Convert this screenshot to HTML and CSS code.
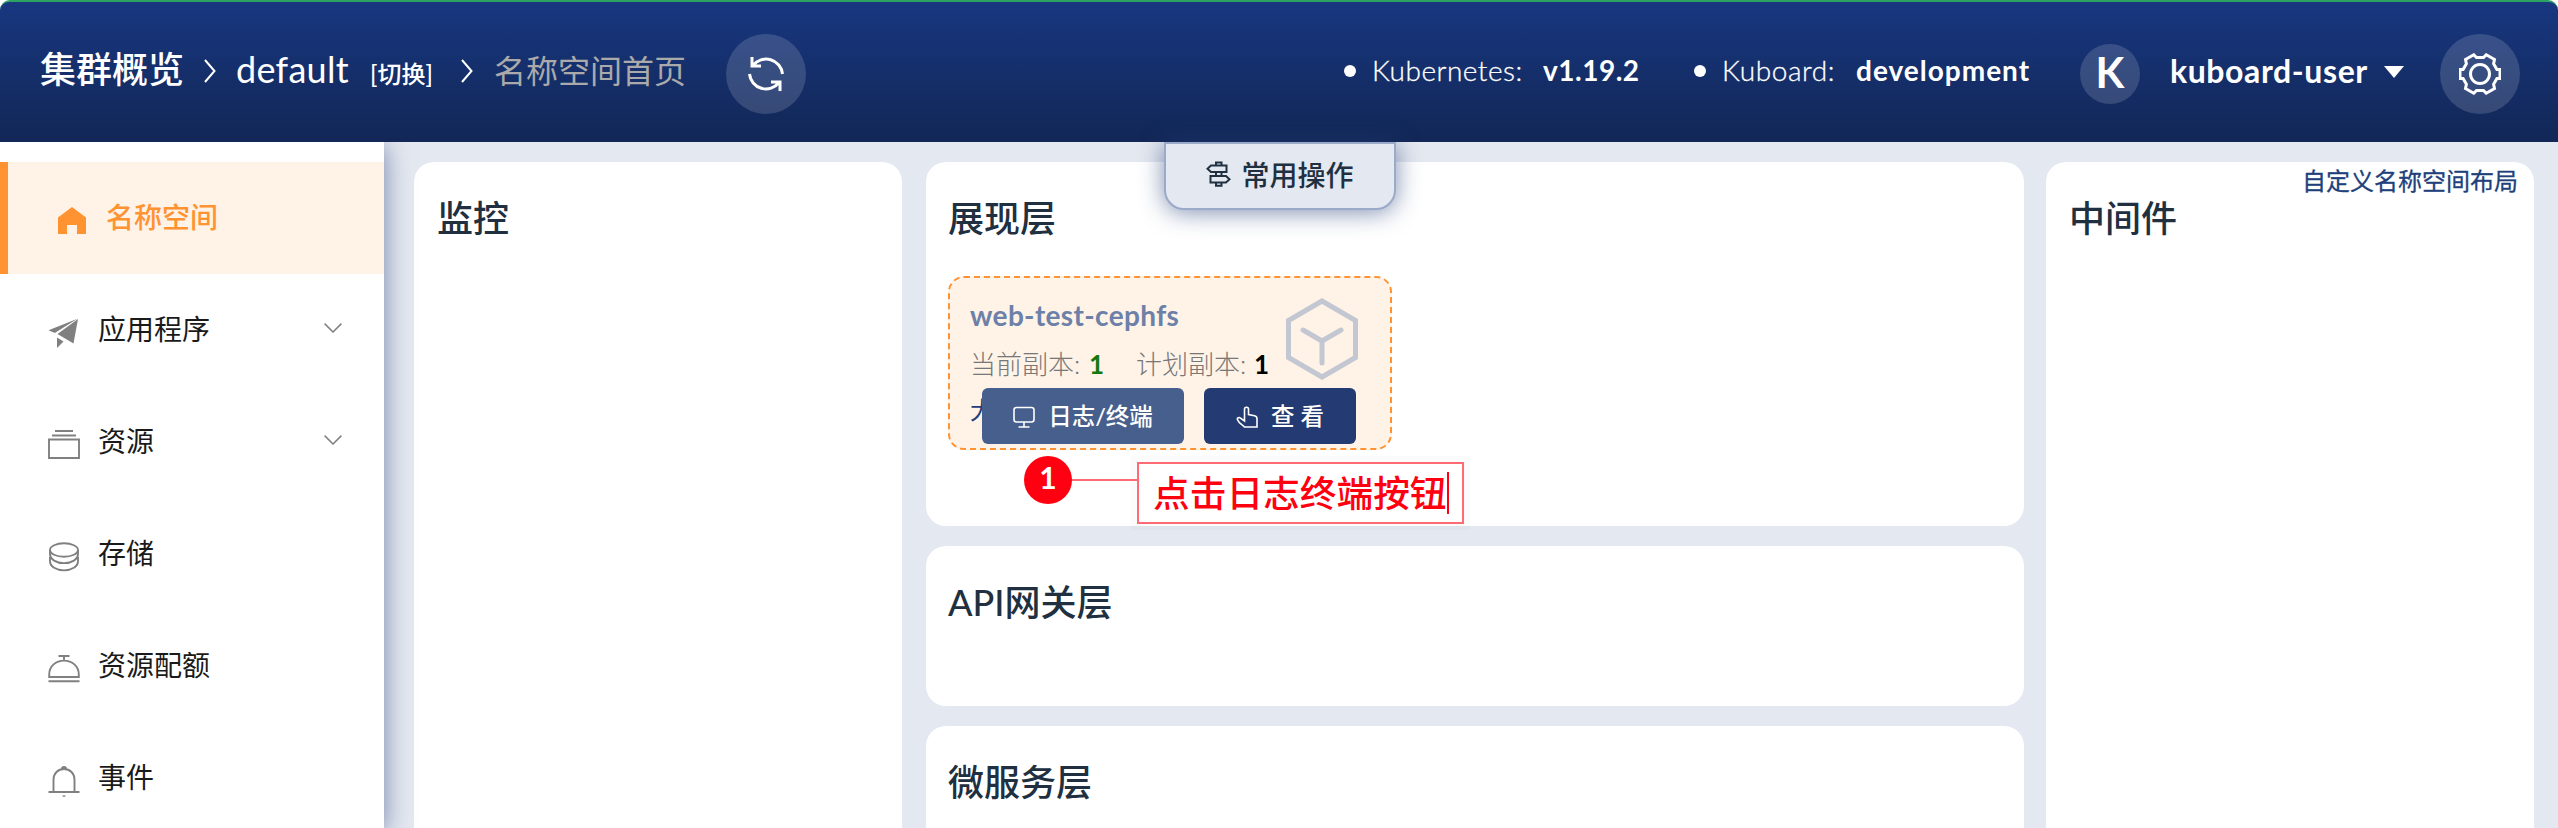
FILE: index.html
```html
<!DOCTYPE html>
<html lang="zh-CN">
<head>
<meta charset="utf-8">
<title>Kuboard</title>
<link rel="stylesheet" href="styles.css">
</head>
<body>
<header class="topbar">
  <nav class="crumbs">
    <span class="crumb crumb-root">集群概览</span>
    <svg class="sep" viewBox="0 0 12 24"><path d="M1 1l9.500 11L1 23"/></svg>
    <span class="crumb crumb-ns">default</span>
    <span class="crumb-switch">[切换]</span>
    <svg class="sep sep-last" viewBox="0 0 12 24"><path d="M1 1l9.500 11L1 23"/></svg>
    <span class="crumb-current">名称空间首页</span>
    <button class="round refresh"><svg viewBox="0 0 40 40"><path d="M6 3v9h9M7 11.500A16.500 16.500 0 0 1 36.500 20M34 37v-9h-9M33 28.500A16.500 16.500 0 0 1 3.500 20"/></svg></button>
  </nav>
  <div class="status">
    <i class="dot"></i><span class="label label-k8s">Kubernetes:</span><b class="ver ver-k8s">v1.19.2</b>
    <i class="dot"></i><span class="label label-kb">Kuboard:</span><b class="ver ver-kb">development</b>
    <span class="avatar">K</span>
    <span class="user">kuboard-user</span>
    <svg class="caret" viewBox="0 0 20 12"><path d="M0 0h20L10 12z"/></svg>
    <button class="round"><svg class="gear" viewBox="0 0 42 42"><circle cx="21" cy="21" r="9.500"/><path d="M14.800 1.800l2.700 2.700h7l2.700-2.700 8.300 4.700-.9 4.200 3.300 5.800h3.100v9h-3.100l-3.300 5.800.9 4.200-8.300 4.700-2.700-2.700h-7l-2.700 2.700-8.300-4.700.9-4.200-3.300-5.800H1v-9h3.100l3.300-5.800-.9-4.200z"/></svg></button>
  </div>
</header>
<div class="body">
  <aside class="sidebar">
    <a class="item active"><svg viewBox="0 0 32 32"><path class="solid" d="M16 2l14 10.500V29H21V20h-10v9H2V12.500z"/></svg><span>名称空间</span></a>
    <a class="item"><svg viewBox="0 0 32 32"><path class="solid" d="M.5 13.200L29.500 1.800 6.800 16zM30 2l-4.500 24.500L9.500 17zM9 20.500l6.500 4L9 31z"/></svg><span>应用程序</span><svg class="chev" viewBox="0 0 18 10"><path d="M.6.600L9 9 17.400.6"/></svg></a>
    <a class="item"><svg viewBox="0 0 32 32"><path d="M7 2h18M4 6.500h24M1 10.500h30v18.500H1z"/></svg><span>资源</span><svg class="chev" viewBox="0 0 18 10"><path d="M.6.600L9 9 17.400.6"/></svg></a>
    <a class="item"><svg viewBox="0 0 32 32"><ellipse cx="16" cy="9" rx="14" ry="6.700"/><path d="M2 9v3c-1 13.500 29 13.500 28 0V9M2 16v3.200c-1 13.500 29 13.500 28 0V16"/></svg><span>存储</span></a>
    <a class="item"><svg viewBox="0 0 32 32"><path d="M10.500 3h11M16 3v4.500M1.200 24v-2.500C1.200 13 8 7.600 16 7.600S30.800 13 30.800 21.500V24zM.5 28.300h31"/></svg><span>资源配额</span></a>
    <a class="item"><svg viewBox="0 0 32 32"><path d="M.5 27h31M5.500 27V14.500C5.500 8.500 10 4 16 4s10.500 4.500 10.500 10.500V27"/><path class="solid" d="M13 4a3 3 0 0 1 6 0zM14 30.500h4l-2 2z"/></svg><span>事件</span></a>
  </aside>
  <main class="board">
    <section class="card"><h2>监控</h2></section>
    <div class="stack">
      <section class="card layer-web">
        <h2>展现层</h2>
        <article class="workload">
          <div class="wl-name">web-test-cephfs</div>
          <div class="wl-row"><span class="rep">当前副本:</span><b class="now">1</b><span class="rep rep-plan">计划副本:</span><b class="plan">1</b></div>
          <div class="wl-size">大</div>
          <svg class="cube" viewBox="0 0 72 82"><path d="M36 3l33.500 19.500v37L36 79 2.500 59.500v-37z"/><path class="arms" d="M17 32l19 11 19-11M36 43v22"/></svg>
          <div class="actions">
            <button class="btn btn-log"><svg viewBox="0 0 22 22"><rect x="1" y="1.500" width="20" height="14.500" rx="2.500"/><path d="M11 16v4.500M5.500 21h11"/></svg>日志/终端</button>
            <button class="btn btn-view"><svg viewBox="0 0 22 22"><path d="M8.500 13V3.200a2 2 0 0 1 4 0v5.300l6 1.300c1.800.4 2.500 1.400 2.500 3V21H8.500c-2-2.500-5.500-3.500-7-7.300C.8 12 3.200 10.800 4.500 12.200L8.500 15z"/></svg>查 看</button>
          </div>
        </article>
        <div class="note"><span class="num">1</span><i class="wire"></i><span class="note-text">点击日志终端按钮</span></div>
      </section>
      <section class="card layer-api"><h2>API网关层</h2></section>
      <section class="card layer-micro"><h2>微服务层</h2></section>
    </div>
    <section class="card"><h2>中间件</h2><a class="custom">自定义名称空间布局</a></section>
    <div class="tab"><svg viewBox="0 0 24 26"><path d="M4.500 4.500h15.500v6.500H4.500L1 7.700zM4 15h15.500l3.500 3.300-3.500 3.200H4zM9.500 4.500v-3h5.500v3M9.500 11v4M15 11v4M9.500 21.500v3.300h5.500v-3.300"/></svg>常用操作</div>
  </main>
</div>
</body>
</html>
```
FILE: styles.css
```css
* { box-sizing: border-box; }
html { background: #fff; }
body {
  margin: 0; width: 2558px; height: 828px; overflow: hidden;
  display: flex; flex-direction: column;
  font-family: Lato, "Noto Sans CJK SC", sans-serif; color: #213040;
  background: #fff;
}
button { border: 0; padding: 0; font-family: inherit; }
svg { fill: none; stroke: currentColor; stroke-width: 2; flex: none; }
h2 { margin: 0; font-size: 36px; line-height: 52px; font-weight: 500; }
span, b { white-space: nowrap; }

.topbar {
  height: 142px; flex: none; border-top: 2px solid #2da263; border-radius: 10px 10px 0 0;
  background: linear-gradient(#183780, #122756);
  color: #fff; display: flex; justify-content: space-between; padding: 0 38px 0 40px;
}
.crumbs, .status { display: flex; align-items: center; height: 142px; }
.crumb { font-size: 36px; line-height: 50px; margin-top: -9px; }
.crumb-root { width: 144px; font-weight: 500; }
.sep { width: 12px; height: 24px; margin: -4px 20px 0 20px; }
.sep-last { margin: -4px 21px 0 29px; }
.crumb-ns { width: 134px; letter-spacing: .3px; }
.crumb-switch { width: 62px; font-size: 24px; font-weight: 500; margin-top: -2px; }
.crumb-current { font-size: 32px; width: 192px; color: #aaa; margin-top: -8px; }
.round { width: 80px; height: 80px; border-radius: 50%; background: rgba(255,255,255,.15); color: #fff; display: flex; align-items: center; justify-content: center; margin-top: 2px; }
.refresh { margin-left: 40px; }
.refresh svg { width: 40px; height: 40px; stroke-width: 3; }
.gear { width: 42px; height: 42px; stroke-width: 3; }
.dot { width: 12px; height: 12px; border-radius: 50%; background: #fff; margin-right: 16px; margin-top: -5px; }
.label, .ver { font-size: 28px; margin-top: -6px; }
.label { font-weight: 300; -webkit-text-stroke: .3px #fff; }
.label-k8s { width: 171px; letter-spacing: .5px; }
.ver-k8s { width: 151px; letter-spacing: .5px; }
.label-kb { width: 134px; letter-spacing: .6px; }
.ver-kb { width: 224px; letter-spacing: 1px; }
.avatar { width: 60px; height: 60px; border-radius: 50%; background: rgba(255,255,255,.15); font-size: 42px; line-height: 56px; text-align: center; font-weight: 700; margin-top: 2px; }
.user { font-size: 32px; font-weight: 700; width: 214px; margin: -6px 0 0 30px; letter-spacing: .6px; }
.caret { width: 20px; height: 12px; margin-top: -2px; margin-right: 36px; fill: #fff; stroke: none; }

.body { flex: 1; display: flex; min-height: 0; }
.sidebar { width: 384px; flex: none; background: #fff; padding-top: 20px; box-shadow: 0 4px 24px #24407a99; clip-path: inset(0 -40px 0 0); z-index: 1; }
.item { height: 112px; display: flex; align-items: center; padding-left: 48px; color: #808080; }
.item svg { width: 32px; height: 32px; margin-top: 6px; stroke-width: 1.900; }
.item span { font-size: 28px; line-height: 40px; color: #1a1a1a; margin: -2px 0 0 18px; flex: 1; }
.item .chev { width: 18px; height: 10px; margin: -5px 42px 0 0; stroke-width: 1.500; }
.item.active { background: #fff3e7; border-left: 8px solid #ff9231; color: #ff9231; }
.item.active span { color: #ff9231; font-weight: 500; margin-left: 18px; }
.item .solid { fill: currentColor; stroke: none; }

.board { flex: 1; background: #e4e8f0; display: grid; grid-template-columns: 488px 1098px 488px; column-gap: 23px; padding: 20px 24px 0 30px; position: relative; }
.card { background: #fff; border-radius: 20px; padding: 30px 22px 0 23px; position: relative; min-height: 0; }
.board > .card { border-radius: 20px 20px 0 0; }
.stack { display: flex; flex-direction: column; gap: 20px; min-height: 0; padding-left: 1px; margin-right: -1px; }
.layer-web { height: 364px; flex: none; }
.layer-api { height: 160px; flex: none; }
.layer-micro { height: 120px; flex: none; }
.stack .card { padding-left: 22px; }
.custom { position: absolute; right: 16px; top: 2px; font-size: 24px; line-height: 34px; color: #213f7b; -webkit-text-stroke: .3px #213f7b; }
.tab {
  position: absolute; left: 780px; top: 0; width: 232px; height: 68px; z-index: 2;
  border: 2px solid #9aaac8; border-radius: 0 0 20px 20px; background: #e4e8f0;
  box-shadow: 0 2px 24px #24407a99; font-size: 28px; font-weight: 500;
  display: flex; align-items: center; justify-content: center; gap: 10px; padding-bottom: 5px;
}
.tab svg { width: 25px; height: 26px; }

.workload {
  width: 444px; height: 174px; margin-top: 32px; position: relative;
  border: 2px dashed #ff9231; border-radius: 16px; background: #fff3e7; padding: 17px 20px;
}
.wl-name { font-size: 28px; line-height: 40px; font-weight: 700; color: #6c80a8; letter-spacing: .35px; }
.wl-row { display: flex; font-size: 26px; line-height: 36px; margin-top: 11px; color: #777; }
.rep { width: 119px; font-weight: 300; }
.rep-plan { margin-left: 32px; width: 118px; }
.now, .plan { width: 15px; }
.now { color: #14780f; }
.plan { color: #000; }
.wl-size { font-size: 24px; line-height: 34px; margin-top: 11px; color: #213f7b; }
.cube { position: absolute; left: 336px; top: 20px; width: 72px; height: 82px; stroke: #c3c7d1; stroke-width: 5; }
.arms { stroke-linecap: round; }
.actions { position: absolute; left: 32px; top: 110px; display: flex; gap: 20px; }
.btn { height: 56px; border-radius: 6px; color: #fff; font-size: 23.500px; font-weight: 500; display: flex; align-items: center; justify-content: center; gap: 13px; padding-bottom: 2px; }
.btn svg { width: 22px; height: 22px; stroke-width: 1.600; margin-top: 3px; }
.btn-log { width: 202px; background: #475f8c; }
.btn-view { width: 152px; background: #233b72; }

.note { position: absolute; left: 98px; top: 294px; display: flex; align-items: flex-start; color: #ff0010; z-index: 2; }
.num { width: 48px; height: 48px; border-radius: 50%; background: #ff0010; color: #fff; text-align: center; font-size: 30px; line-height: 43px; font-weight: 700; }
.wire { width: 65px; height: 2px; background: #ff6b75; margin-top: 23px; }
.note-text { width: 327px; height: 62px; margin-top: 6px; border: 2px solid #ff6b75; padding-left: 14px; font-size: 36.700px; line-height: 62px; font-weight: 500; background: #fff; box-shadow: 0 0 0 6px #80808008; display: flex; align-items: center; }
.note-text::after { content: ""; width: 2px; height: 42px; background: #ff0010; }
```
